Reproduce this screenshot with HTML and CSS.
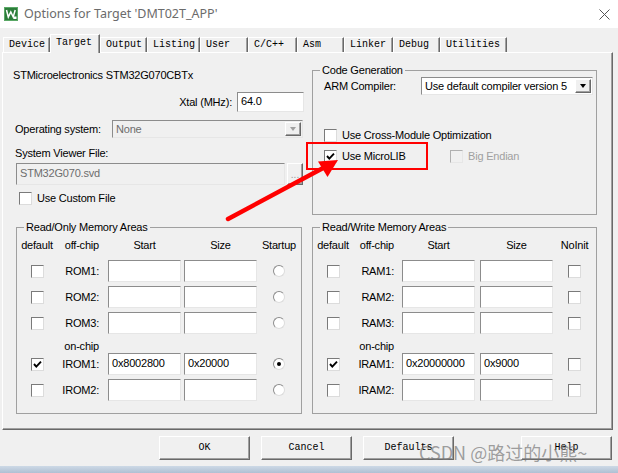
FILE: index.html
```html
<!DOCTYPE html>
<html lang="en">
<head>
<meta charset="utf-8">
<title>Options for Target</title>
<link rel="stylesheet" href="styles.css">
</head>
<body>
<div class="titlebar">
  <svg class="app-icon" width="14" height="14" viewBox="0 0 14 14"><rect x="0" y="0" width="14" height="14" fill="#2c7d3a"/><rect x="0.5" y="0.5" width="13" height="13" fill="none" stroke="#5aa866"/><polyline points="2.5,3 4.3,10 6.8,5 9.2,10 11.2,3" fill="none" stroke="#fff" stroke-width="1.5"/><rect x="9.5" y="9.5" width="3" height="2.5" fill="#fff"/></svg>
  <span class="title">Options for Target 'DMT02T_APP'</span>
  <svg class="close" width="11" height="11" viewBox="0 0 11 11"><path d="M0.5 0.5L10.5 10.5M10.5 0.5L0.5 10.5" stroke="#555" stroke-width="1" fill="none"/></svg>
</div>

<div class="tabs">
  <div class="tab t-device">Device</div>
  <div class="tab t-target active">Target</div>
  <div class="tab t-output">Output</div>
  <div class="tab t-listing">Listing</div>
  <div class="tab t-user">User</div>
  <div class="tab t-cc">C/C++</div>
  <div class="tab t-asm">Asm</div>
  <div class="tab t-linker">Linker</div>
  <div class="tab t-debug">Debug</div>
  <div class="tab t-util">Utilities</div>
</div>

<div class="panel">
  <div class="target-col">
    <div class="device">STMicroelectronics STM32G070CBTx</div>
    <div class="xtal-row"><span class="xtal-lbl">Xtal (MHz):</span><div class="edit xtal">64.0</div></div>
    <div class="os-row"><span>Operating system:</span>
      <div class="combo disabled os"><span class="combo-text">None</span><span class="combo-btn"><i class="tri"></i></span></div>
    </div>
    <div class="svf-label">System Viewer File:</div>
    <div class="svd-row"><div class="edit disabled svd">STM32G070.svd</div><div class="browse">...</div></div>
    <div class="check-row custom"><span class="cb"></span><span>Use Custom File</span></div>
  </div>

  <fieldset class="group codegen">
    <legend>Code Generation</legend>
    <div class="arm-row"><span>ARM Compiler:</span>
      <div class="combo compiler"><span class="combo-text">Use default compiler version 5</span><span class="combo-btn"><i class="tri"></i></span></div>
    </div>
    <div class="check-row cross"><span class="cb"></span><span>Use Cross-Module Optimization</span></div>
    <div class="micro-row">
      <div class="check-row micro"><span class="cb"><svg width="11" height="11" viewBox="0 0 11 11"><path d="M2 5 L4.3 7.6 L9 2.6" fill="none" stroke="#000" stroke-width="1.9"/></svg></span><span>Use MicroLIB</span></div>
      <div class="check-row big"><span class="cb dis"></span><span>Big Endian</span></div>
    </div>
  </fieldset>

  <fieldset class="group mem rom">
    <legend>Read/Only Memory Areas</legend>
    <div class="mgrid">
      <span class="h">default</span><span class="h lab">off-chip</span><span class="h">Start</span><span class="h sz">Size</span><span class="h">Startup</span>

      <span class="cc"><span class="cb"></span></span><span class="lab">ROM1:</span><span class="edit m"></span><span class="edit m sz"></span><span class="cc"><span class="radio"></span></span>
      <span class="cc"><span class="cb"></span></span><span class="lab">ROM2:</span><span class="edit m"></span><span class="edit m sz"></span><span class="cc"><span class="radio"></span></span>
      <span class="cc"><span class="cb"></span></span><span class="lab">ROM3:</span><span class="edit m"></span><span class="edit m sz"></span><span class="cc"><span class="radio"></span></span>
      <div class="onchip"><span>on-chip</span></div>
      <span class="cc"><span class="cb"><svg width="11" height="11" viewBox="0 0 11 11"><path d="M2 5 L4.3 7.6 L9 2.6" fill="none" stroke="#000" stroke-width="1.9"/></svg></span></span><span class="lab">IROM1:</span><span class="edit m">0x8002800</span><span class="edit m sz">0x20000</span><span class="cc"><span class="radio on"></span></span>
      <span class="cc"><span class="cb"></span></span><span class="lab">IROM2:</span><span class="edit m"></span><span class="edit m sz"></span><span class="cc"><span class="radio"></span></span>
    </div>
  </fieldset>

  <fieldset class="group mem ram">
    <legend>Read/Write Memory Areas</legend>
    <div class="mgrid">
      <span class="h">default</span><span class="h lab">off-chip</span><span class="h">Start</span><span class="h sz">Size</span><span class="h">NoInit</span>

      <span class="cc"><span class="cb"></span></span><span class="lab">RAM1:</span><span class="edit m"></span><span class="edit m sz"></span><span class="cc"><span class="cb"></span></span>
      <span class="cc"><span class="cb"></span></span><span class="lab">RAM2:</span><span class="edit m"></span><span class="edit m sz"></span><span class="cc"><span class="cb"></span></span>
      <span class="cc"><span class="cb"></span></span><span class="lab">RAM3:</span><span class="edit m"></span><span class="edit m sz"></span><span class="cc"><span class="cb"></span></span>
      <div class="onchip"><span>on-chip</span></div>
      <span class="cc"><span class="cb"><svg width="11" height="11" viewBox="0 0 11 11"><path d="M2 5 L4.3 7.6 L9 2.6" fill="none" stroke="#000" stroke-width="1.9"/></svg></span></span><span class="lab">IRAM1:</span><span class="edit m">0x20000000</span><span class="edit m sz">0x9000</span><span class="cc"><span class="cb"></span></span>
      <span class="cc"><span class="cb"></span></span><span class="lab">IRAM2:</span><span class="edit m"></span><span class="edit m sz"></span><span class="cc"><span class="cb"></span></span>
    </div>
  </fieldset>
</div>

<div class="buttons">
  <div class="btn">OK</div>
  <div class="btn">Cancel</div>
  <div class="btn">Defaults</div>
  <div class="btn help">Help</div>
</div>
<div class="frame-bottom"></div>

<div class="redbox"></div>
<svg class="annot-arrow" width="618" height="473" viewBox="0 0 618 473">
  <line x1="228" y1="219" x2="325" y2="167" stroke="#f00" stroke-width="4.5" stroke-linecap="round"/>
  <polygon points="338,160 318,161.5 327.5,177" fill="#f00"/>
</svg>
<div class="watermark">CSDN @路过的小熊~</div>
</body>
</html>
```

FILE: styles.css
```css
* { box-sizing: border-box; }
html, body { margin: 0; padding: 0; }
body {
  width: 618px;
  height: 473px;
  overflow: hidden;
  position: relative;
  background: #f0f0f0;
  font-family: "Liberation Sans", Arial, sans-serif;
  font-size: 11px;
  letter-spacing: -0.2px;
  color: #000;
}

/* title bar */
.titlebar {
  height: 28px;
  background: #fff;
  display: flex;
  align-items: center;
  padding-left: 4px;
}
.app-icon { display: block; }
.title {
  margin-left: 6px;
  font-family: "Noto Sans", "Liberation Sans", sans-serif;
  font-size: 12.5px;
  letter-spacing: 0;
  color: #6b6b6b;
  line-height: 16px;
}
.close { margin-left: auto; margin-right: 8px; display: block; }

/* tabs */
.tabs {
  height: 24px;
  display: flex;
  align-items: flex-end;
  padding-left: 3px;
}
.tab {
  height: 15px;
  border-top: 1px solid #fff;
  border-left: 1px solid #fff;
  border-right: 1px solid #696969;
  box-shadow: inset -1px 0 #a0a0a0;
  padding-left: 5px;
  font-family: "Liberation Mono", monospace;
  font-size: 10px;
  letter-spacing: 0;
  line-height: 14px;
  white-space: nowrap;
}
.tab.active {
  height: 19px;
  margin-bottom: -1px;
  position: relative;
  z-index: 1;
  background: #f0f0f0;
  line-height: 15px;
}
.t-device { width: 47px; }
.t-target { width: 50px; }
.t-output { width: 47px; }
.t-listing { width: 53px; }
.t-user { width: 48px; }
.t-cc { width: 49px; }
.t-asm { width: 47px; }
.t-linker { width: 49px; }
.t-debug { width: 47px; }
.t-util { width: 67px; }

/* panel */
.panel {
  margin-left: 2px;
  width: 611px;
  height: 378px;
  border: 1px solid;
  border-color: #fff #696969 #696969 #fff;
  box-shadow: inset -1px -1px #a0a0a0;
  display: grid;
  grid-template-columns: 291px 285px;
  grid-template-rows: 152px auto;
  column-gap: 8px;
  row-gap: 5px;
  padding: 10px 0 0 10px;
  align-items: start;
}

.target-col { line-height: 14px; }
.device { margin-top: 5px; }
.xtal-row {
  margin-top: 10px;
  display: flex;
  justify-content: flex-end;
  align-items: center;
}
.xtal-lbl { margin-right: 5px; }
.os-row {
  margin-top: 8px;
  display: flex;
  justify-content: space-between;
  align-items: center;
  padding: 0 1px 0 2px;
}
.svf-label { margin-top: 8px; padding-left: 2px; }
.svd-row {
  margin-top: 3px;
  display: flex;
  padding-left: 3px;
}
.custom { margin-top: 6px; padding-left: 6px; }

/* generic controls */
.edit {
  display: block;
  background: #fff;
  border: 1px solid;
  border-color: #8c8c8c #e6e6e6 #e6e6e6 #8c8c8c;
  padding-left: 3px;
  line-height: 18px;
  white-space: nowrap;
  overflow: hidden;
}
.edit.disabled { background: #f0f0f0; color: #6d6d6d; }
.xtal { width: 67px; height: 20px; line-height: 16px; }
.svd { width: 269px; height: 22px; }
.browse {
  width: 16px;
  height: 22px;
  margin-left: 2px;
  border: 1px solid;
  border-color: #fff #696969 #696969 #fff;
  box-shadow: inset -1px -1px #a0a0a0;
  color: #9a9a9a;
  font-size: 10px;
  letter-spacing: 0;
  line-height: 10px;
  display: flex;
  align-items: flex-end;
  justify-content: center;
  padding-bottom: 4px;
}

.combo {
  height: 18px;
  background: #fff;
  border: 1px solid;
  border-color: #8c8c8c #e6e6e6 #e6e6e6 #8c8c8c;
  display: flex;
  align-items: center;
  padding: 0 1px 0 3px;
}
.combo-text { flex: 1; line-height: 16px; white-space: nowrap; }
.combo-btn {
  width: 16px;
  height: 14px;
  border: 1px solid;
  border-color: #fff #696969 #696969 #fff;
  box-shadow: inset -1px -1px #a0a0a0;
  background: #f0f0f0;
  display: flex;
  align-items: center;
  justify-content: center;
}
.tri {
  display: block;
  width: 0;
  height: 0;
  border-left: 3.5px solid transparent;
  border-right: 3.5px solid transparent;
  border-top: 4px solid #000;
}
.combo.disabled { background: #f0f0f0; color: #6d6d6d; }
.combo.disabled .tri { border-top-color: #a0a0a0; }
.os { width: 191px; }
.compiler { width: 172px; margin-right: 3px; }

.cb {
  width: 13px;
  height: 13px;
  flex: none;
  display: inline-flex;
  align-items: center;
  justify-content: center;
  background: #fff;
  border: 1px solid;
  border-color: #7a7a7a #dcdcdc #dcdcdc #7a7a7a;
}
.cb svg { display: block; }
.cb.dis { background: #f0f0f0; border-color: #b0b0b0 #e6e6e6 #e6e6e6 #b0b0b0; }
.radio {
  width: 12px;
  height: 12px;
  border-radius: 50%;
  background: #fff;
  border: 1px solid;
  border-color: #8c8c8c #dcdcdc #dcdcdc #8c8c8c;
  display: inline-flex;
  align-items: center;
  justify-content: center;
}
.radio.on::after {
  content: "";
  width: 4px;
  height: 4px;
  border-radius: 50%;
  background: #000;
}

.check-row {
  display: flex;
  align-items: center;
  gap: 5px;
  line-height: 14px;
}

/* group boxes */
.group {
  margin: 0;
  padding: 0;
  border: 1px solid #a0a0a0;
  min-width: 0;
}
.group legend {
  padding: 0 2px;
  margin-left: 7px;
  line-height: 14px;
}
.codegen { height: 152px; }
.arm-row {
  height: 18px;
  display: flex;
  justify-content: space-between;
  align-items: center;
  padding-left: 11px;
  line-height: 14px;
}
.cross { margin-top: 33px; padding-left: 11px; }
.micro-row { margin-top: 7px; display: flex; padding-left: 11px; }
.micro { width: 126px; }
.big { color: #a0a0a0; }

/* memory areas */
.rom { margin-left: 3px; width: 286px; }
.ram { width: 285px; }
.mgrid {
  display: grid;
  grid-template-rows: 18px 22px 22px 22px 11px 22px 22px;
  row-gap: 4px;
  padding: 4px 0 12px;
  align-items: center;
  line-height: 14px;
}
.rom .mgrid { grid-template-columns: 40px 51px 73px 76px 44px; --lp: 9px; --lw: 91px; }
.ram .mgrid { grid-template-columns: 40px 49px 73px 78px 43px; --lp: 8px; --lw: 89px; }
.mgrid .h { align-self: start; text-align: center; white-space: nowrap; }
.mgrid .lab { text-align: right; padding-right: var(--lp); white-space: nowrap; }
.mgrid .sz { justify-self: end; width: 73px; }
.mgrid .edit.m { height: 22px; }
.cc { display: flex; justify-content: center; align-items: center; }
.onchip { grid-column: 1 / -1; align-self: start; margin-top: 1px; }
.onchip span { display: block; width: var(--lw); text-align: right; padding-right: var(--lp); }

/* buttons */
.buttons {
  height: 36px;
  display: flex;
  justify-content: flex-end;
  padding: 6px 6px 0 0;
}
.btn {
  width: 91px;
  height: 24px;
  margin-left: 11px;
  border: 1px solid;
  border-color: #fff #696969 #696969 #fff;
  box-shadow: inset -1px -1px #a0a0a0;
  font-family: "Liberation Mono", monospace;
  font-size: 10px;
  letter-spacing: 0;
  line-height: 22px;
  text-align: center;
}
.btn.help { margin-left: 67px; }
.frame-bottom {
  height: 7px;
  background: linear-gradient(#cdd9e6, #afc0d3);
}

/* annotations */
.redbox {
  position: absolute;
  left: 306px;
  top: 142px;
  width: 122px;
  height: 28px;
  border: 2px solid #f00;
}
.annot-arrow {
  position: absolute;
  left: 0;
  top: 0;
  pointer-events: none;
}
.watermark {
  position: absolute;
  left: 419px;
  top: 440px;
  font-family: "Noto Sans CJK SC", "Noto Sans", sans-serif;
  font-size: 18px;
  letter-spacing: 0;
  line-height: 24px;
  color: rgba(120, 120, 120, 0.7);
  white-space: nowrap;
}
```
